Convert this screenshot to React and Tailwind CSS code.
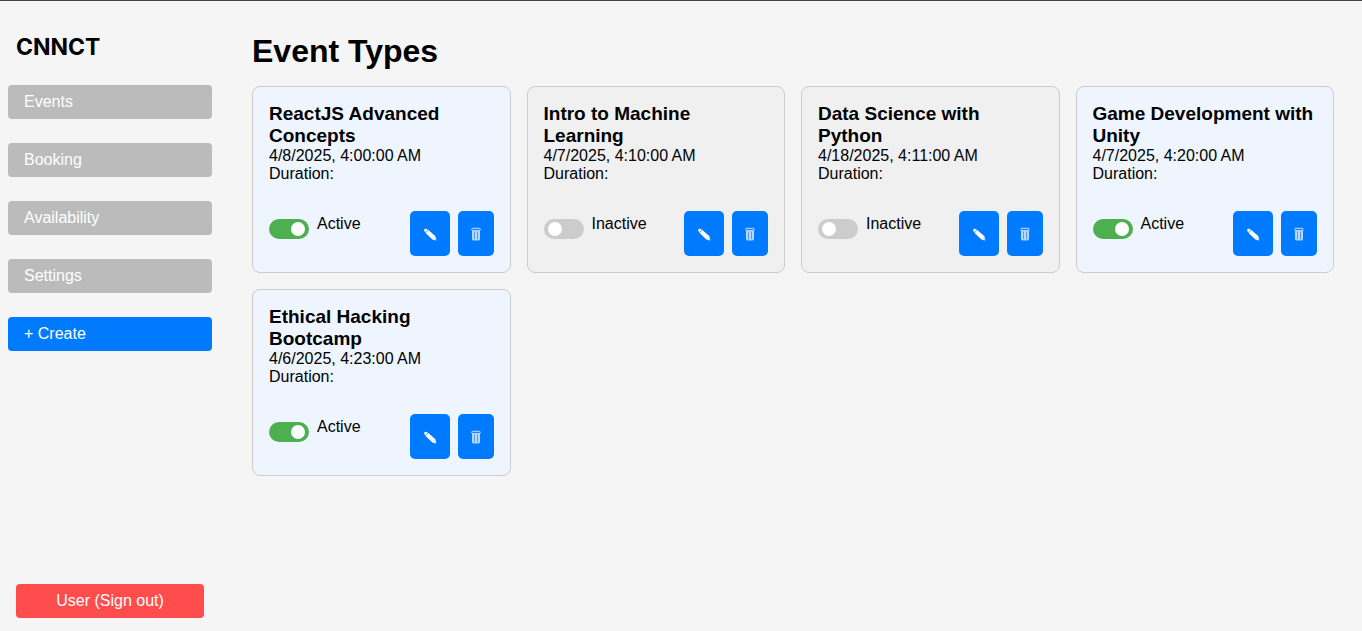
import { useState } from "react";

const navItems = ["Events", "Booking", "Availability", "Settings"];

const initialEvents = [
  { id: 1, title: "ReactJS Advanced Concepts", date: "4/8/2025, 4:00:00 AM", active: true },
  { id: 2, title: "Intro to Machine Learning", date: "4/7/2025, 4:10:00 AM", active: false },
  { id: 3, title: "Data Science with Python", date: "4/18/2025, 4:11:00 AM", active: false },
  { id: 4, title: "Game Development with Unity", date: "4/7/2025, 4:20:00 AM", active: true },
  { id: 5, title: "Ethical Hacking Bootcamp", date: "4/6/2025, 4:23:00 AM", active: true },
];

function PencilIcon() {
  return (
    <svg width="14" height="16" viewBox="0 0 14 16" aria-hidden="true">
      <path d="M1.3 4.9 Q.7 3.8 1.8 3.1 Q2.9 2.3 3.8 3 L4.8 3.8 L2.4 6.6 Z" fill="#fff" />
      <path d="M2.6 6.9 L5.3 4 L12.2 10.1 L13.2 13 L12.8 14.4 L9.4 13.4 Z" fill="#fff" />
      <path d="M2.3 6.5 L4.9 3.7 M9.9 12.9 L12.2 10.4" stroke="#8fc3ff" strokeWidth=".6" />
      <path d="M11.7 13.2 L12.3 12.2 L13.3 12.9 L13.2 14.5 Z" fill="#9cc8ff" />
    </svg>
  );
}

function TrashIcon() {
  return (
    <svg width="10" height="16" viewBox="0 0 10 16" aria-hidden="true">
      <path d="M1 4 H9 V13 Q9 14.6 7.4 14.6 H2.6 Q1 14.6 1 13 Z" fill="#a9cfff" />
      <rect x=".8" y="2.3" width="8.4" height="2.4" rx=".8" fill="#1e80ff" stroke="#d5e8ff" strokeWidth=".9" />
      <path d="M3.5 5.6 V13 M6.5 5.6 V13" stroke="#3493ff" strokeWidth=".8" />
      <path d="M2 5.4 V13 M5 5.4 V13.6 M8 5.4 V13" stroke="#d5e8ff" strokeWidth=".8" />
    </svg>
  );
}

function EventCard({ event, onToggle }) {
  return (
    <article
      className={`rounded-lg border border-[#cccccc] p-4 ${event.active ? "bg-[#eef5ff]" : "bg-[#f0f0f0]"}`}
    >
      <h2 className="text-[19px] leading-[22px] font-bold">{event.title}</h2>
      <p>{event.date}</p>
      <p>Duration:</p>
      <div className="mt-7 flex items-start justify-between">
        <label className="flex cursor-pointer items-start gap-2">
          <span className="mt-2 flex">
            <input type="checkbox" checked={event.active} onChange={onToggle} className="peer sr-only" />
            <span className="flex h-5 w-10 items-center rounded-full bg-[#cccccc] px-1 peer-checked:justify-end peer-checked:bg-[#4caf50]">
              <span className="size-3.5 rounded-full bg-white" />
            </span>
          </span>
          <span className="mt-1">{event.active ? "Active" : "Inactive"}</span>
        </label>
        <div className="flex gap-2">
          <button type="button" aria-label={`Edit ${event.title}`} className="flex h-[45px] w-10 items-center justify-center rounded-[5px] bg-[#007bff]">
            <PencilIcon />
          </button>
          <button type="button" aria-label={`Delete ${event.title}`} className="flex h-[45px] w-9 items-center justify-center rounded-[5px] bg-[#007bff]">
            <TrashIcon />
          </button>
        </div>
      </div>
    </article>
  );
}

export default function App() {
  const [events, setEvents] = useState(initialEvents);

  const toggle = (id) =>
    setEvents((list) => list.map((e) => (e.id === id ? { ...e, active: !e.active } : e)));

  return (
    <div className="flex min-h-screen border-t border-[#4a3f38] bg-[#f5f5f5] font-['Liberation_Sans',Arial,sans-serif] text-base leading-[18px] text-black">
      <aside className="flex w-[220px] shrink-0 flex-col px-2 pt-8 pb-[13px]">
        <div className="px-2 font-['Inter',sans-serif] text-[23px] leading-7 font-bold">CNNCT</div>
        <nav className="mt-6 flex flex-col gap-6">
          {navItems.map((item) => (
            <a key={item} href={`#${item.toLowerCase()}`} className="rounded bg-[#bbbbbb] px-4 py-2 text-white">
              {item}
            </a>
          ))}
          <a href="#create" className="rounded bg-[#007bff] px-4 py-2 text-white">
            + Create
          </a>
        </nav>
        <button type="button" className="mx-2 mt-auto rounded bg-[#ff4d4d] px-4 py-2 text-white">
          User (Sign out)
        </button>
      </aside>
      <main className="min-w-0 flex-1 pt-8 pr-7 pl-8">
        <h1 className="text-[32px] leading-9 font-bold">Event Types</h1>
        <div className="mt-[17px] grid grid-cols-4 gap-4">
          {events.map((event) => (
            <EventCard key={event.id} event={event} onToggle={() => toggle(event.id)} />
          ))}
        </div>
      </main>
    </div>
  );
}
